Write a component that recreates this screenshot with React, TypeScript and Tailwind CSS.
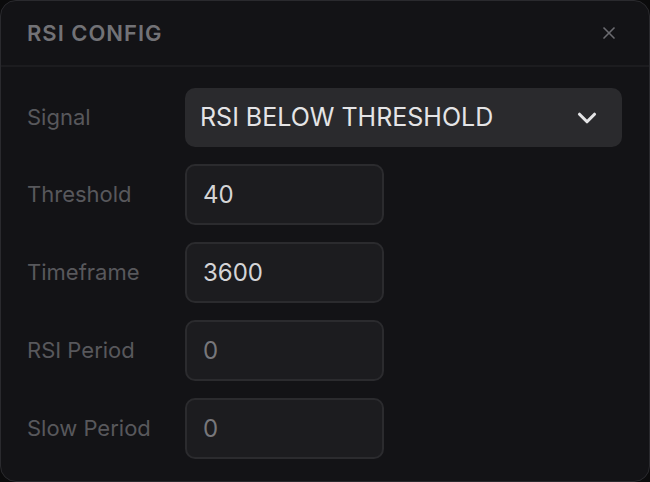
import { ChevronDown, X } from 'lucide-react'

const rows = [
  { label: 'Threshold', value: '40', muted: false },
  { label: 'Timeframe', value: '3600', muted: false },
  { label: 'RSI Period', value: '0', muted: true },
  { label: 'Slow Period', value: '0', muted: true },
]

export default function App() {
  return (
    <div
      className="w-[650px] h-[482px] bg-[#0b0b0c]"
      style={{ fontFamily: 'Inter, "Noto Sans", sans-serif' }}
    >
      <div className="w-full h-full bg-[#131316] border border-[#2a2a2e] rounded-[16px] flex flex-col overflow-hidden">
        <div className="h-[66px] flex items-center justify-between pl-[26px] pr-[30px] border-b-2 border-[#1c1c1f] shrink-0">
          <h1 className="text-[22px] font-semibold tracking-[0.045em] text-[#727276] pt-[1px]">RSI CONFIG</h1>
          <button className="text-[#6b6b70]">
            <X className="w-[20px] h-[20px]" strokeWidth={2} />
          </button>
        </div>

        <div className="flex flex-col pl-[26px] pr-[27px] pt-[21px] gap-[17px]">
          <div className="flex items-center">
            <label className="w-[158px] text-[22px] text-[#58585c]">Signal</label>
            <div className="flex-1 h-[59px] bg-[#2a2a2d] rounded-[10px] flex items-center justify-between pl-[15px] pr-[20px]">
              <span className="text-[25px] text-[#e4e4e6]">RSI BELOW THRESHOLD</span>
              <ChevronDown className="w-[30px] h-[30px] text-[#e4e4e6]" strokeWidth={2.5} />
            </div>
          </div>

          {rows.map(row => (
            <div key={row.label} className="flex items-center">
              <label className="w-[158px] text-[22px] text-[#58585c]">{row.label}</label>
              <div className="w-[199px] h-[61px] bg-[#1c1c1f] border-2 border-[#2b2b2e] rounded-[10px] flex items-center px-[16px]">
                <span className={`text-[24px] ${row.muted ? 'text-[#77777b]' : 'text-[#d4d4d6]'}`}>
                  {row.value}
                </span>
              </div>
            </div>
          ))}
        </div>
      </div>
    </div>
  )
}
